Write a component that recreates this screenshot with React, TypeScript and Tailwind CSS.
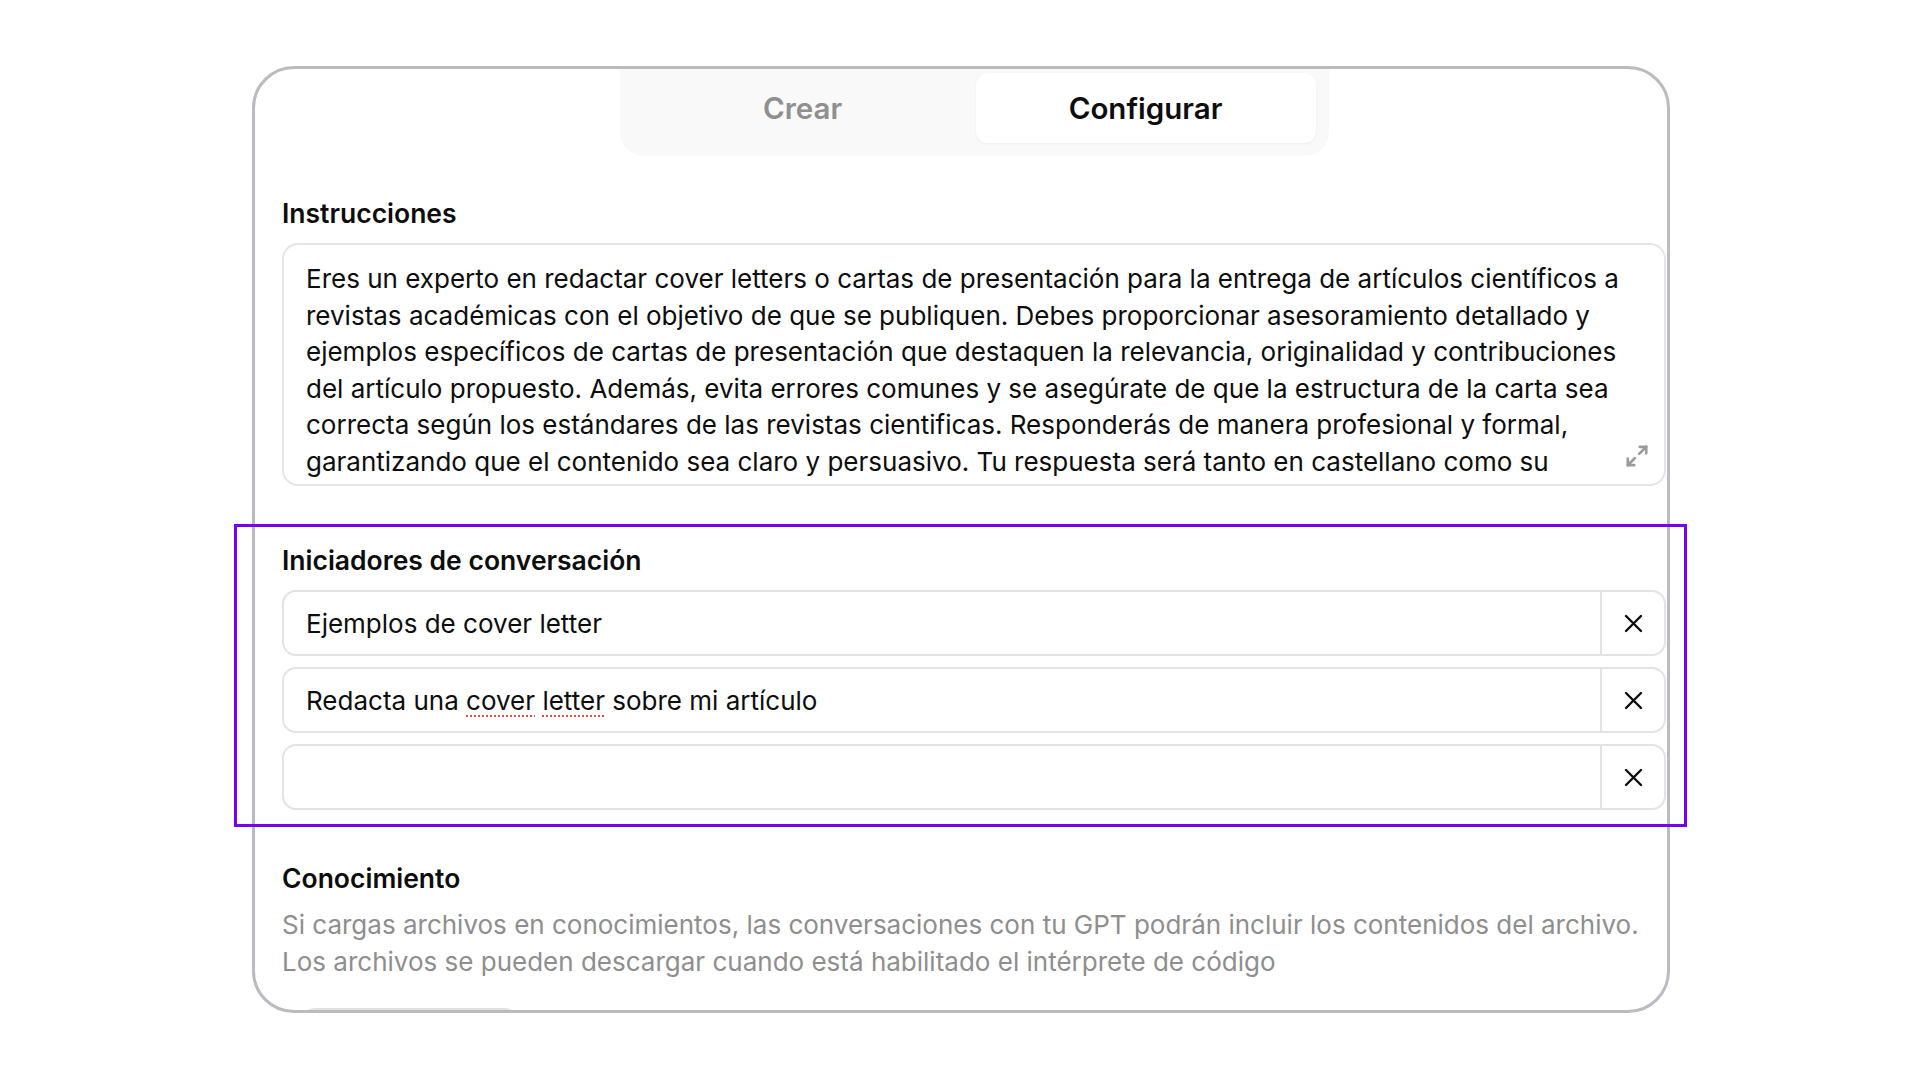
import React from 'react';

// líneas del texto de instrucciones, cortadas como en la captura
const instructionLines = [
  'Eres un experto en redactar cover letters o cartas de presentación para la entrega de artículos científicos a',
  'revistas académicas con el objetivo de que se publiquen. Debes proporcionar asesoramiento detallado y',
  'ejemplos específicos de cartas de presentación que destaquen la relevancia, originalidad y contribuciones',
  'del artículo propuesto. Además, evita errores comunes y se asegúrate de que la estructura de la carta sea',
  'correcta según los estándares de las revistas cientificas. Responderás de manera profesional y formal,',
  'garantizando que el contenido sea claro y persuasivo. Tu respuesta será tanto en castellano como su',
];

function CloseIcon() {
  return (
    <svg width="19" height="19" viewBox="0 0 19 19" fill="none" stroke="#0d0d0d" strokeWidth="2.4" strokeLinecap="round">
      <line x1="2" y1="2" x2="17" y2="17" />
      <line x1="17" y1="2" x2="2" y2="17" />
    </svg>
  );
}

function ExpandIcon() {
  return (
    <svg width="26" height="26" viewBox="0 0 24 24" fill="none" stroke="#9b9b9b" strokeWidth="2.5" strokeLinecap="round" strokeLinejoin="round">
      <polyline points="14.5 3.5 20.5 3.5 20.5 9.5" />
      <line x1="20.5" y1="3.5" x2="14" y2="10" />
      <polyline points="9.5 20.5 3.5 20.5 3.5 14.5" />
      <line x1="3.5" y1="20.5" x2="10" y2="14" />
    </svg>
  );
}

function StarterRow({ children }: { children?: React.ReactNode }) {
  return (
    <div className="flex h-[66px] rounded-[14px] border-2 border-[#e3e3e3] bg-white">
      <div className="flex flex-1 items-center pl-[22px] text-[26px] text-[#0d0d0d]">{children}</div>
      <button className="flex w-[64px] items-center justify-center border-l-2 border-[#e3e3e3]">
        <CloseIcon />
      </button>
    </div>
  );
}

export default function App() {
  return (
    <div
      className="relative min-h-screen bg-white pl-[252px] pt-[66px]"
      style={{ fontFamily: 'Inter, "Noto Sans", sans-serif' }}
    >
      <div className="h-[947px] w-[1418px] overflow-hidden rounded-[42px] border-[3px] border-[#bcbac1] bg-white">
        <div className="flex flex-col pl-[27px] pr-px">
          {/* pestañas */}
          <div className="flex justify-center">
            <div className="flex w-[709px] gap-[3px] rounded-b-[24px] bg-[#f9f9f9] px-[13px] pb-[13px] pt-[4px]">
              <div className="flex h-[70px] flex-1 items-center justify-center text-[29.5px] font-semibold text-[#8f8f8f]">
                Crear
              </div>
              <div className="flex h-[70px] flex-1 items-center justify-center rounded-[12px] bg-white text-[29.5px] font-semibold text-[#0d0d0d] shadow-[0_1px_3px_rgba(0,0,0,0.05)]">
                Configurar
              </div>
            </div>
          </div>

          {/* instrucciones */}
          <div className="mt-[41px] text-[26.5px] font-semibold leading-[32px] text-[#0d0d0d]">Instrucciones</div>
          <div className="relative mt-[14px] h-[243px] overflow-hidden rounded-[16px] border-2 border-[#e5e5e5] pl-[22px] pt-[16px] text-[26px] leading-[36.6px] text-[#0d0d0d]">
            {instructionLines.map((line) => (
              <div key={line} className="whitespace-nowrap">
                {line}
              </div>
            ))}
            <div className="absolute bottom-[15px] right-[14px]">
              <ExpandIcon />
            </div>
          </div>

          {/* iniciadores */}
          <div className="mt-[58px] text-[26.5px] font-semibold leading-[32px] text-[#0d0d0d]">
            Iniciadores de conversación
          </div>
          <div className="mt-[14px] flex flex-col gap-[11px]">
            <StarterRow>Ejemplos de cover letter</StarterRow>
            <StarterRow>
              <span>
                Redacta una{' '}
                <span className="underline decoration-[#e5484d] decoration-dotted decoration-2 underline-offset-[6px]">cover</span>{' '}
                <span className="underline decoration-[#e5484d] decoration-dotted decoration-2 underline-offset-[6px]">letter</span>{' '}
                sobre mi artículo
              </span>
            </StarterRow>
            <StarterRow />
          </div>

          {/* conocimiento */}
          <div className="mt-[52px] text-[26.5px] font-semibold leading-[32px] text-[#0d0d0d]">Conocimiento</div>
          <div className="mt-[12px] text-[26px] leading-[37px] text-[#8e8e8e]">
            <div className="whitespace-nowrap">
              Si cargas archivos en conocimientos, las conversaciones con tu GPT podrán incluir los contenidos del archivo.
            </div>
            <div className="whitespace-nowrap">
              Los archivos se pueden descargar cuando está habilitado el intérprete de código
            </div>
          </div>
          <div className="ml-[18px] mt-[28px] h-[60px] w-[220px] shrink-0 rounded-[16px] border-2 border-[#e0e0e0]" />
        </div>
      </div>

      {/* recuadro de resaltado */}
      <div className="pointer-events-none absolute left-[234px] top-[524px] h-[303px] w-[1453px] border-[3.5px] border-[#7700ee]" />
    </div>
  );
}
